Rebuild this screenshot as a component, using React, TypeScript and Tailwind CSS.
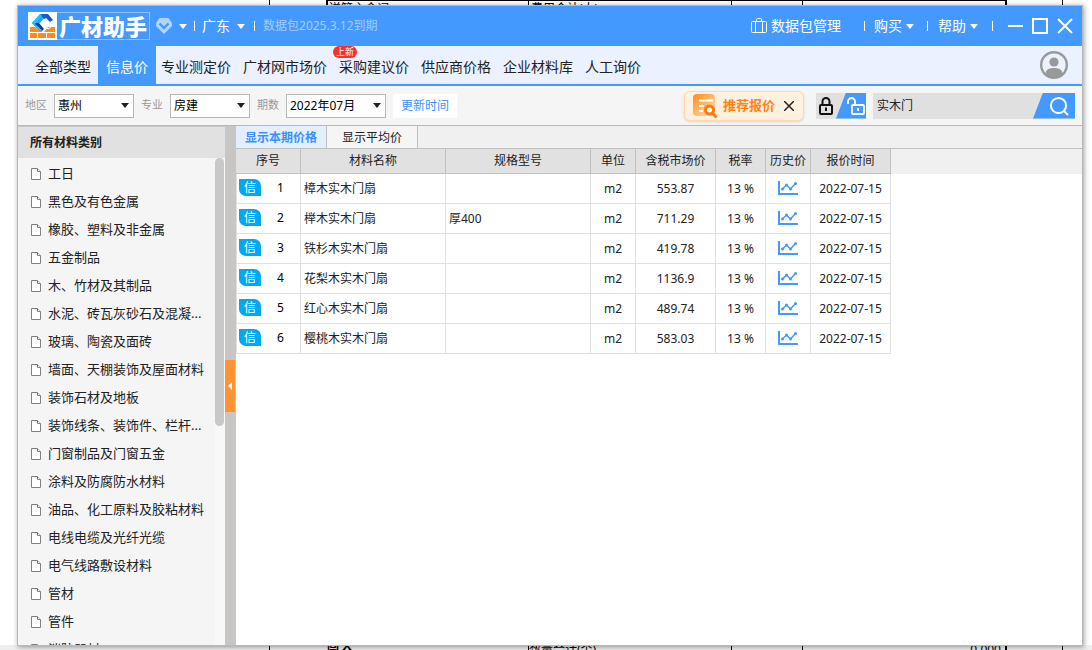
import React, { useState } from 'react';
import clsx from 'clsx';

interface Material {
  id: number;
  name: string;
  spec: string;
  unit: string;
  price: string;
  tax: string;
  date: string;
}

const NAV_ITEMS = ['专业测定价', '广材网市场价', '采购建议价', '供应商价格', '企业材料库', '人工询价'];

const CATEGORIES = [
  '工日',
  '黑色及有色金属',
  '橡胶、塑料及非金属',
  '五金制品',
  '木、竹材及其制品',
  '水泥、砖瓦灰砂石及混凝...',
  '玻璃、陶瓷及面砖',
  '墙面、天棚装饰及屋面材料',
  '装饰石材及地板',
  '装饰线条、装饰件、栏杆...',
  '门窗制品及门窗五金',
  '涂料及防腐防水材料',
  '油品、化工原料及胶粘材料',
  '电线电缆及光纤光缆',
  '电气线路敷设材料',
  '管材',
  '管件',
  '消防器材',
];

const MATERIALS: Material[] = [
  { id: 1, name: '樟木实木门扇', spec: '', unit: 'm2', price: '553.87', tax: '13 %', date: '2022-07-15' },
  { id: 2, name: '榉木实木门扇', spec: '厚400', unit: 'm2', price: '711.29', tax: '13 %', date: '2022-07-15' },
  { id: 3, name: '铁杉木实木门扇', spec: '', unit: 'm2', price: '419.78', tax: '13 %', date: '2022-07-15' },
  { id: 4, name: '花梨木实木门扇', spec: '', unit: 'm2', price: '1136.9', tax: '13 %', date: '2022-07-15' },
  { id: 5, name: '红心木实木门扇', spec: '', unit: 'm2', price: '489.74', tax: '13 %', date: '2022-07-15' },
  { id: 6, name: '樱桃木实木门扇', spec: '', unit: 'm2', price: '583.03', tax: '13 %', date: '2022-07-15' },
];

const COLUMNS = ['序号', '材料名称', '规格型号', '单位', '含税市场价', '税率', '历史价', '报价时间'];

function Caret({ className }: { className?: string }) {
  return (
    <svg viewBox="0 0 8 5" className={clsx('h-[5px] w-2 shrink-0', className)} fill="currentColor" aria-hidden="true">
      <path d="M0 0h8L4 5z" />
    </svg>
  );
}

function Divider({ className }: { className?: string }) {
  return <span className={clsx('h-[10px] w-px shrink-0 bg-white', className)} />;
}

function Logo() {
  return (
    <div className="flex h-7 shrink-0 items-center border border-[#8ec3ff]">
      <svg viewBox="0 0 29 28" className="-ml-px h-7 w-[29px]" aria-hidden="true">
        <path d="M0 0h29v28H0z" fill="#fff" />
        {/* brick wall */}
        <path d="M2 15h5l6 5H2zM16 20l4-5h7v5zM2 21h7v5H2zM10 21h8v5h-8zM19 21h8v5h-8z" fill="#ff8a17" />
        <path d="m18 15 2 2 3-2" fill="none" stroke="#fff" />
        {/* folded ribbon */}
        <path d="M12 2h8l-8 9H4z" fill="#22a6ff" />
        <path d="M12 2h8l5 6-3 2-4-4-2 1z" fill="#1657d6" />
        <path d="M4 11h7l5 6-3 3z" fill="#12398f" />
        <path d="M4 11 12 2l2 1-7 9 7 6-1 2z" fill="#17c8f6" />
      </svg>
      <span className="px-[2px] text-[22px] leading-6 font-black text-white">广材助手</span>
    </div>
  );
}

function TitleBar() {
  return (
    <header className="flex h-10 shrink-0 items-center bg-[#4499ff] pr-[9px] pl-[10px] text-sm text-white">
      <Logo />
      <button type="button" aria-label="会员" className="ml-[6px] flex items-center gap-[7px]">
        <svg viewBox="0 0 16 16" className="h-4 w-4" aria-hidden="true">
          <path d="M3.500 0h9L16 5v3L8 16 0 8V5z" fill="#b0d5ff" />
          <path d="m3.500 5.500 4.500 4.500 4.500-4.500" fill="none" stroke="#4499ff" strokeWidth="2.400" />
        </svg>
        <Caret />
      </button>
      <Divider className="mx-[7px]" />
      <button type="button" className="flex items-center gap-[7px]">
        广东
        <Caret />
      </button>
      <Divider className="mr-2 ml-[9px]" />
      <span className="text-xs text-[#a0cdff]">数据包2025.3.12到期</span>

      <div className="ml-auto flex items-center">
        <button type="button" className="flex items-center gap-1">
          <svg viewBox="0 0 16 16" className="h-4 w-4" fill="none" stroke="currentColor" aria-hidden="true">
            <rect x="0.500" y="3.500" width="15" height="11" rx="1" />
            <path d="M4.500 14.500V3.500M11.500 14.500V3.500M5.500 3.500v-2a1 1 0 0 1 1-1h3a1 1 0 0 1 1 1v2" />
          </svg>
          数据包管理
        </button>
        <Divider className="mr-[9px] ml-[23px]" />
        <button type="button" className="flex items-center gap-1">
          购买
          <Caret />
        </button>
        <Divider className="mr-[10px] ml-[13px]" />
        <button type="button" className="flex items-center gap-1">
          帮助
          <Caret />
        </button>
        <Divider className="mr-[14px] ml-[14px]" />
        <div className="flex gap-[9px]">
          <button type="button" aria-label="最小化">
            <svg viewBox="0 0 16 16" className="h-4 w-4" stroke="currentColor" strokeWidth="2">
              <path d="M1 8h15" />
            </svg>
          </button>
          <button type="button" aria-label="最大化">
            <svg viewBox="0 0 16 16" className="h-4 w-4" fill="none" stroke="currentColor" strokeWidth="2">
              <path d="M1 1h14v14H1z" />
            </svg>
          </button>
          <button type="button" aria-label="关闭">
            <svg viewBox="0 0 16 16" className="h-4 w-4" stroke="currentColor" strokeWidth="2">
              <path d="m1 1 14 14M15 1 1 15" />
            </svg>
          </button>
        </div>
      </div>
    </header>
  );
}

function MainNav() {
  return (
    <nav className="flex h-10 shrink-0 border-b-2 border-[#4499ff] bg-[#ebf1ff] pr-[14px] text-sm text-[#222]">
      <button type="button" className="pt-1 pr-[7px] pl-[17px]">全部类型</button>
      <button type="button" className="bg-[#4499ff] px-2 pt-1 text-white">信息价</button>
      <div className="ml-[5px] flex gap-3">
        {NAV_ITEMS.map(item => (
          <button key={item} type="button" className="relative pt-1">
            {item}
            {item === '采购建议价' && (
              <span className="absolute top-0 -left-[6px] h-3 w-6 rounded-full bg-[#f5302e] text-center text-[9px] leading-3 text-white">
                上新
              </span>
            )}
          </button>
        ))}
      </div>
      <button type="button" aria-label="用户" className="ml-auto">
        <svg viewBox="0 0 28 28" className="h-7 w-7" aria-hidden="true">
          <circle cx="14" cy="14" r="12.800" fill="#ebf1ff" stroke="#999" strokeWidth="2.400" />
          <circle cx="14" cy="11" r="4.600" fill="#999" />
          <path d="M5.500 23c0-4 3-6 8.500-6s8.500 2 8.500 6A12.500 12.500 0 0 1 14 26.500 12.500 12.500 0 0 1 5.500 23z" fill="#999" />
        </svg>
      </button>
    </nav>
  );
}

interface FilterSelectProps {
  id: string;
  label: string;
  options: string[];
  wide?: boolean;
}

function FilterSelect({ id, label, options, wide }: FilterSelectProps) {
  return (
    <div className="flex items-center gap-[7px]">
      <label htmlFor={id} className="text-[11px] text-[#999]">{label}</label>
      <div className="relative">
        <select
          id={id}
          className={clsx(
            'block h-6 appearance-none border border-[#b8b8b8] bg-white pl-[3px] text-xs text-black',
            wide ? 'w-[100px]' : 'w-20'
          )}
        >
          {options.map(option => (
            <option key={option}>{option}</option>
          ))}
        </select>
        <Caret className="pointer-events-none absolute top-[9px] right-[5px] text-[#222]" />
      </div>
    </div>
  );
}

function PromoButton() {
  return (
    <div className="flex h-[30px] items-center rounded-md border border-[#ffd9ab] bg-[#fff1df] pr-[9px] pl-2 shadow">
      <button type="button" className="flex items-center gap-[6px] text-[13px] font-bold text-[#ff8418]">
        <svg viewBox="0 0 24 24" className="h-6 w-6" aria-hidden="true">
          <defs>
            <linearGradient id="sheet" x1="0" y1="0" x2="1" y2="1">
              <stop offset="0" stopColor="#ff8a1a" />
              <stop offset="1" stopColor="#ffe6b8" />
            </linearGradient>
          </defs>
          <path d="M4 0h14a4 4 0 0 1 4 4v18H4a4 4 0 0 1-4-4V4a4 4 0 0 1 4-4z" fill="url(#sheet)" />
          <path d="M6 6.500h14M6 12h5M6 17h4" stroke="#fff" strokeWidth="2" />
          <circle cx="16.500" cy="16" r="4" fill="#fff" stroke="#ff7a0e" strokeWidth="3" />
          <path d="m19.500 19 4 4.500" stroke="#ff7a0e" strokeWidth="3" />
        </svg>
        推荐报价
      </button>
      <button type="button" aria-label="关闭推荐" className="ml-[9px] text-[#222]">
        <svg viewBox="0 0 10 10" className="h-[10px] w-[10px]" stroke="currentColor" strokeWidth="1.500">
          <path d="m0 0 10 10M10 0 0 10" />
        </svg>
      </button>
    </div>
  );
}

function Toolbar() {
  const [keyword, setKeyword] = useState('实木门');

  return (
    <div className="flex h-10 shrink-0 items-center border-b border-[#b8b8b8] bg-[#f5f5f5] px-[7px]">
      <div className="flex items-center gap-[7px]">
        <FilterSelect id="region" label="地区" options={['惠州', '广州', '深圳']} />
        <FilterSelect id="major" label="专业" options={['房建', '市政']} />
        <FilterSelect id="period" label="期数" options={['2022年07月', '2022年06月']} wide />
        <button type="button" className="h-6 bg-white px-2 text-xs text-[#3b92ff]">更新时间</button>
      </div>

      <div className="ml-auto flex items-center">
        <PromoButton />
        <div className="ml-3 flex h-[26px] w-[50px] justify-between bg-[#e0e0e0]">
          <button type="button" aria-label="锁定" className="pl-[3px]">
            <svg viewBox="0 0 14 18" className="h-[18px] w-[14px]" fill="none" stroke="#111" strokeWidth="2">
              <rect x="1" y="8" width="12" height="9" rx="1" />
              <path d="M3.500 8V4.500a3.500 3.500 0 0 1 7 0V8M7 10.500v3.500" />
            </svg>
          </button>
          <button
            type="button"
            aria-label="解锁"
            className="flex w-[30px] items-center justify-end bg-[#4499ff] pr-px [clip-path:polygon(10px_0,100%_0,100%_100%,0_100%)]"
          >
            <svg viewBox="0 0 18 18" className="h-[18px] w-[18px]" fill="none" stroke="#fff" strokeWidth="1.800">
              <rect x="5" y="8" width="12" height="9" rx="1" />
              <path d="M1 7V4.500a3.500 3.500 0 0 1 7 0V8M11 11v3" />
            </svg>
          </button>
        </div>
        <form className="ml-[7px] flex h-[26px] w-[202px] bg-[#e0e0e0]" onSubmit={e => e.preventDefault()}>
          <input
            type="text"
            aria-label="搜索材料"
            value={keyword}
            onChange={e => setKeyword(e.target.value)}
            className="min-w-0 flex-1 bg-transparent pl-1 text-xs text-[#222] outline-none"
          />
          <button
            type="submit"
            aria-label="搜索"
            className="flex w-[42px] items-center justify-end bg-[#4499ff] pr-[6px] [clip-path:polygon(10px_0,100%_0,100%_100%,0_100%)]"
          >
            <svg viewBox="0 0 20 20" className="h-5 w-5" fill="none" stroke="#fff" strokeWidth="2">
              <circle cx="9.500" cy="9.500" r="7.600" />
              <path d="m15 15 4 4" />
            </svg>
          </button>
        </form>
      </div>
    </div>
  );
}

function Sidebar() {
  return (
    <aside className="flex w-[207px] shrink-0 flex-col bg-[#f5f5f5]">
      <h2 className="h-8 shrink-0 border-t border-[#c8c8c8] bg-[#e1e1e1] pl-3 text-xs leading-[31px] font-bold text-[#222]">
        所有材料类别
      </h2>
      <div className="flex min-h-0 flex-1">
        <ul className="min-w-0 flex-1 overflow-hidden pt-[2px]">
          {CATEGORIES.map(category => (
            <li key={category}>
              <button
                type="button"
                className="flex h-7 w-full items-center gap-[7px] pl-[13px] text-left text-[13px] whitespace-nowrap text-[#222]"
              >
                <svg viewBox="0 0 10 12" className="h-3 w-[10px] shrink-0" fill="#fff" stroke="#808080" aria-hidden="true">
                  <path d="M0.500 0.500h6l3 3v8h-9z" />
                  <path d="M6.500 0.500v3h3" />
                </svg>
                {category}
              </button>
            </li>
          ))}
        </ul>
        <div className="w-[10px] bg-[#f8f8f8]">
          <div className="h-[55%] w-[9px] rounded-full bg-[#c8c8c8]" />
        </div>
      </div>
    </aside>
  );
}

function Splitter() {
  return (
    <div className="flex w-[11px] shrink-0 items-center bg-[#c8c6c4]">
      <button type="button" aria-label="收起" className="flex h-[52px] w-[10px] items-center justify-center bg-[#ff9233]">
        <svg viewBox="0 0 4 8" className="h-2 w-1" fill="#fff">
          <path d="M4 0v8L0 4z" />
        </svg>
      </button>
    </div>
  );
}

function TrendIcon() {
  return (
    <svg viewBox="0 0 20 14" className="h-[14px] w-5" fill="none" stroke="#4499ff" aria-hidden="true">
      <path d="M1 0v13h19" strokeWidth="2" />
      <path d="m4.500 8 4-4 4 4 5-5.500" strokeWidth="1.500" />
      <g fill="#4499ff" stroke="none">
        <circle cx="4.500" cy="8" r="1.500" />
        <circle cx="8.500" cy="4" r="1.500" />
        <circle cx="12.500" cy="8" r="1.500" />
        <circle cx="17.500" cy="2.500" r="1.500" />
      </g>
    </svg>
  );
}

function MaterialTable() {
  const cell = 'border-r border-b border-[#e0e0e0] p-0 text-center';

  return (
    <table className="w-full table-fixed border-separate border-spacing-0 text-xs text-[#222]">
      <colgroup>
        <col className="w-[65px]" />
        <col className="w-[145px]" />
        <col className="w-[145px]" />
        <col className="w-[45px]" />
        <col className="w-[80px]" />
        <col className="w-[50px]" />
        <col className="w-[45px]" />
        <col className="w-[80px]" />
        <col />
      </colgroup>
      <thead>
        <tr className="h-[25px]">
          {COLUMNS.map(column => (
            <th key={column} className="border-r border-b border-[#c0c0c0] bg-[#e1e1e1] p-0 font-normal">
              {column}
            </th>
          ))}
          <td className="bg-[#f0f0f0] p-0" />
        </tr>
      </thead>
      <tbody>
        {MATERIALS.map(material => (
          <tr key={material.id} className="h-[30px]">
            <td className={clsx(cell, 'border-l')}>
              <div className="flex items-center pb-[2px] pl-[2px] text-black">
                <span className="h-[17px] w-[22px] rounded-tr-[7px] rounded-bl-[7px] bg-[#00a8f0] text-xs leading-[17px] text-white">
                  信
                </span>
                <span className="flex-1">{material.id}</span>
              </div>
            </td>
            <td className="border-r border-b border-[#e0e0e0] py-0 pr-0 pl-[3px]">{material.name}</td>
            <td className="border-r border-b border-[#e0e0e0] py-0 pr-0 pl-[3px]">{material.spec}</td>
            <td className={cell}>{material.unit}</td>
            <td className={cell}>{material.price}</td>
            <td className={cell}>{material.tax}</td>
            <td className={cell}>
              <button type="button" aria-label="历史价" className="flex w-full justify-center pb-[2px]">
                <TrendIcon />
              </button>
            </td>
            <td className={cell}>{material.date}</td>
          </tr>
        ))}
      </tbody>
    </table>
  );
}

function PricePanel() {
  return (
    <main className="min-w-0 flex-1 bg-white">
      <div className="flex h-[23px] border-b border-[#c0c0c0] bg-[#f0f0f0] text-xs">
        <button type="button" className="w-[91px] border-r border-[#c0c0c0] bg-[#e3efff] pt-[2px] font-bold text-[#3b92ff]">
          显示本期价格
        </button>
        <button type="button" className="w-[91px] border-r border-[#c0c0c0] bg-[#f5f5f5] pt-[2px] text-[#222]">
          显示平均价
        </button>
      </div>
      <MaterialTable />
    </main>
  );
}

// Edges of the spreadsheet that lies behind the window
function SheetTop() {
  return (
    <div className="flex h-[6px] shrink-0 overflow-hidden bg-white text-xs leading-3 text-black">
      <div className="w-[270px] border-r border-black" />
      <div className="w-14" />
      <div className="flex flex-1 border-r-2 border-l-2 border-black">
        <div className="w-[201px] border-t border-r border-black pt-[2px] pl-px">送管主金词</div>
        <div className="w-[203px] border-t border-r border-black pt-[2px] pl-[2px]">费用合计(大)</div>
        <div className="w-[71px] border-t border-r border-black" />
        <div className="flex-1 border-t border-black" />
      </div>
      <div className="w-14 border-r border-black" />
      <div className="w-[29px]" />
    </div>
  );
}

function SheetBottom() {
  return (
    <div className="flex h-[5px] shrink-0 overflow-hidden bg-[#eee] text-xs leading-[10px] text-black">
      <div className="w-[270px] border-r border-black" />
      <div className="w-14" />
      <div className="w-[171px] pl-px font-bold">圆 へ</div>
      <div className="w-[31px]" />
      <div className="w-[203px] border-l border-black">数量合计(个)</div>
      <div className="w-[72px] border-r border-l border-black" />
      <div className="flex-1 border-r-2 border-black pr-1 text-right">0.000</div>
      <div className="w-14 border-r border-black" />
      <div className="w-[29px]" />
    </div>
  );
}

export default function App() {
  return (
    <div className="flex h-screen flex-col overflow-hidden bg-white font-['Noto_Sans','Noto_Sans_CJK_SC',sans-serif]">
      <SheetTop />
      <div className="z-10 mr-[10px] ml-[18px] flex min-h-0 flex-1 flex-col shadow-[0_0_0_1px_#b8b8b8,1px_1px_5px_1px_#00000066]">
        <TitleBar />
        <MainNav />
        <Toolbar />
        <div className="flex min-h-0 flex-1">
          <Sidebar />
          <Splitter />
          <PricePanel />
        </div>
      </div>
      <SheetBottom />
    </div>
  );
}
